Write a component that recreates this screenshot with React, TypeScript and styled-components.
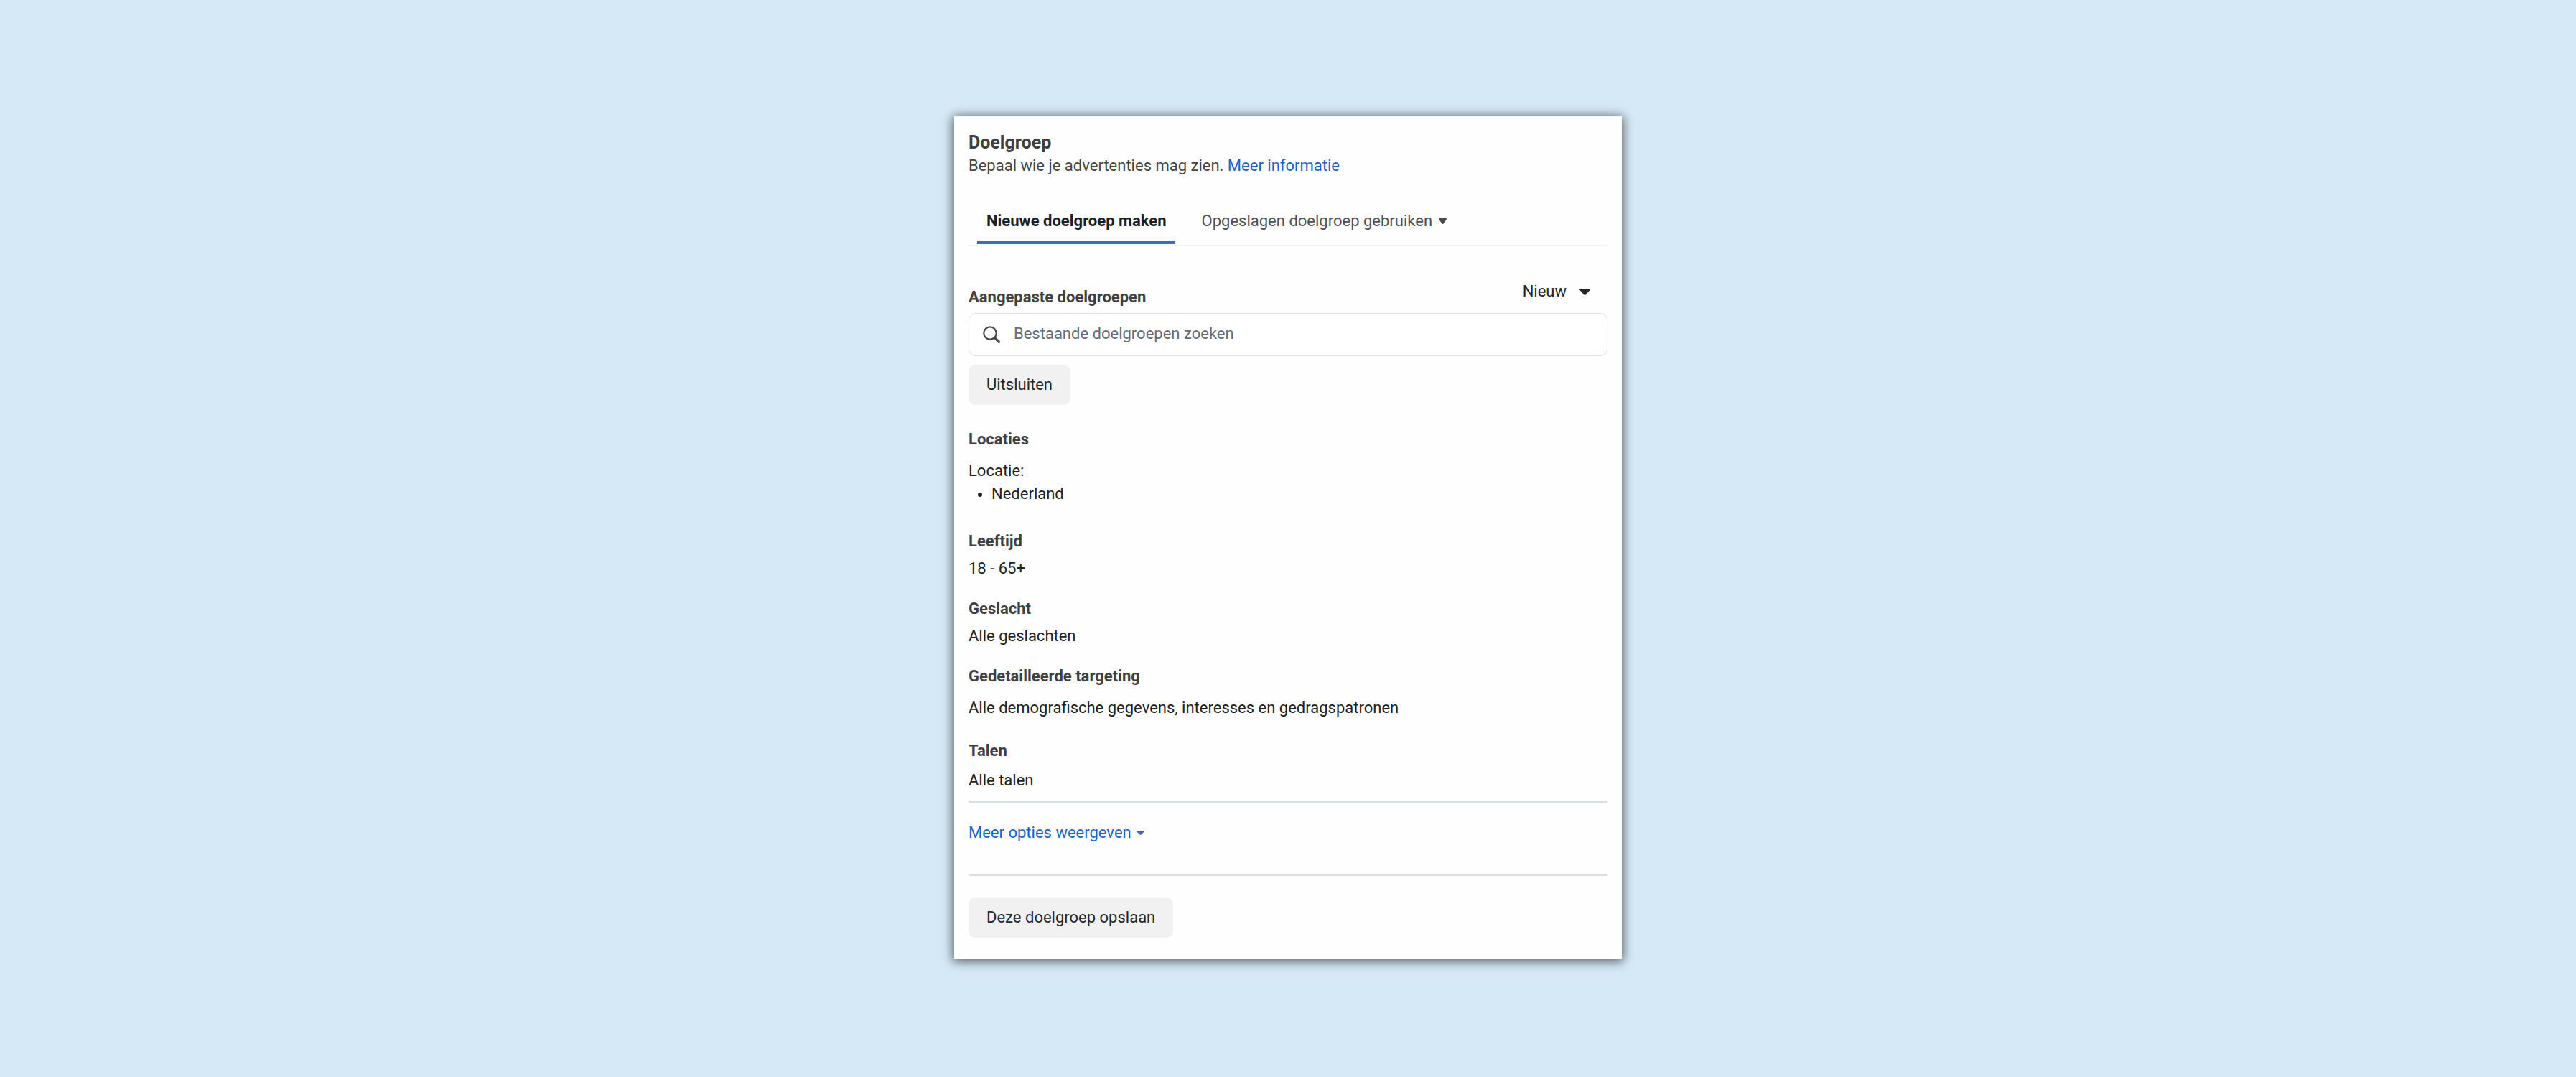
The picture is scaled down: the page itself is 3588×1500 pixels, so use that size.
import React from "react";
import styled, { createGlobalStyle } from "styled-components";

const GlobalStyle = createGlobalStyle`
  *, *::before, *::after { box-sizing: border-box; }
  body {
    margin: 0;
    background: #d5e9f7;
    color: #1f2123;
    font-family: Roboto, "Liberation Sans", sans-serif;
    font-size: 22px;
    line-height: 32px;
  }
  h1, h2, p, ul { margin: 0; }
  button, input { font: inherit; }
`;

const Page = styled.main`
  display: flex;
  justify-content: center;
  align-items: flex-start;
  min-height: 100vh;
  padding: 162px 24px;
`;

const Card = styled.section`
  width: 100%;
  max-width: 930px;
  padding: 21px 20px 29px;
  background: #fefefe;
  box-shadow: 0 2px 14px 2px rgba(0, 0, 0, 0.6);
`;

const Title = styled.h1`
  color: #404040;
  font-size: 25px;
  line-height: 32px;
  font-weight: 700;
`;

const Intro = styled.p`
  color: #444;
`;

const Link = styled.a`
  color: #1763cf;
  text-decoration: none;
`;

const Tabs = styled.div`
  display: flex;
  gap: 24px;
  margin-top: 45px;
  padding: 0 12px 1px;
  border-bottom: 2px solid #f3f3f5;
`;

const Tab = styled.button<{ $active?: boolean }>`
  display: flex;
  align-items: center;
  gap: 9px;
  padding: 0 12px 11px 13px;
  border: 0;
  border-bottom: 5px solid ${(p) => (p.$active ? "#4267b2" : "transparent")};
  background: none;
  color: ${(p) => (p.$active ? "#1c1e26" : "#4f5057")};
  font-weight: ${(p) => (p.$active ? 700 : 400)};
`;

const AudienceHeader = styled.div`
  display: flex;
  justify-content: space-between;
  height: 40px;
  margin-top: 47px;
`;

const Heading = styled.h2`
  color: #404040;
  font-size: 22px;
  line-height: 32px;
  font-weight: 700;
`;

const AudienceLabel = styled.label`
  align-self: flex-end;
  color: #404040;
  font-weight: 700;
`;

const NewButton = styled.button`
  display: flex;
  align-items: center;
  align-self: flex-start;
  gap: 18px;
  padding: 0 24px;
  border: 0;
  background: none;
  color: #262626;
`;

const SearchBox = styled.div`
  display: flex;
  align-items: center;
  gap: 19px;
  height: 60px;
  margin: 6px 0 12px;
  padding: 0 19px;
  border: 1px solid #dddfe3;
  border-radius: 10px;
  background: #fff;
`;

const SearchInput = styled.input`
  flex: 1;
  min-width: 0;
  padding: 0 0 2px;
  border: 0;
  outline: 0;
  background: none;
  color: #1f2123;
  &::placeholder {
    color: #646b76;
    opacity: 1;
  }
`;

const Button = styled.button`
  display: block;
  height: 56px;
  padding: 0 25px;
  border: 0;
  border-radius: 9px;
  background: #f1f1f1;
  color: #262729;
`;

const Field = styled.section<{ $before: number; $gap: number }>`
  display: flex;
  flex-direction: column;
  gap: ${(p) => p.$gap}px;
  margin-top: ${(p) => p.$before}px;
`;

const Locations = styled.ul`
  padding: 0 0 0 32px;
  list-style: none;
`;

const Location = styled.li`
  &::before {
    content: "";
    display: inline-block;
    width: 6px;
    height: 6px;
    margin: 0 13px 3px -19px;
    border-radius: 50%;
    background: #222;
  }
`;

const MoreBar = styled.div`
  margin: 12px 0 30px;
  padding: 26px 0 41px;
  border-top: 3px solid #dadde2;
  border-bottom: 3px solid #dadde2;
`;

const MoreButton = styled.button`
  display: flex;
  align-items: center;
  gap: 7px;
  padding: 0;
  border: 0;
  background: none;
  color: #1763cf;
`;

function Caret({ width, height, color }: { width: number; height: number; color: string }) {
  return (
    <svg width={width} height={height} viewBox="0 0 14 9" preserveAspectRatio="none" aria-hidden="true">
      <path
        d="M1.4 0h11.2c1.3 0 1.8 1.3.9 2.1L8.3 8.3c-.8.9-1.8.9-2.6 0L.5 2.1C-.4 1.3.1 0 1.4 0z"
        fill={color}
      />
    </svg>
  );
}

function SearchIcon() {
  return (
    <svg width="24" height="24" viewBox="0 0 24 24" fill="none" stroke="#43474e" aria-hidden="true">
      <circle cx="10" cy="10" r="8.7" strokeWidth="2.2" />
      <path d="M16 16l2 2" strokeWidth="2.2" />
      <path d="M17.6 17.6l4.7 4.7" strokeWidth="3.4" strokeLinecap="round" />
    </svg>
  );
}

export default function App() {
  return (
    <>
      <GlobalStyle />
      <Page>
        <Card>
          <Title>Doelgroep</Title>
          <Intro>
            Bepaal wie je advertenties mag zien. <Link href="#info">Meer informatie</Link>
          </Intro>

          <Tabs role="tablist">
            <Tab type="button" role="tab" aria-selected="true" $active>
              Nieuwe doelgroep maken
            </Tab>
            <Tab type="button" role="tab" aria-selected="false">
              Opgeslagen doelgroep gebruiken
              <Caret width={11} height={8} color="#4b4b4f" />
            </Tab>
          </Tabs>

          <AudienceHeader>
            <AudienceLabel htmlFor="audience-search">Aangepaste doelgroepen</AudienceLabel>
            <NewButton type="button" aria-haspopup="menu">
              Nieuw
              <Caret width={15} height={9} color="#262626" />
            </NewButton>
          </AudienceHeader>
          <SearchBox>
            <SearchIcon />
            <SearchInput id="audience-search" type="text" placeholder="Bestaande doelgroepen zoeken" />
          </SearchBox>
          <Button type="button">Uitsluiten</Button>

          <Field $before={32} $gap={12}>
            <Heading>Locaties</Heading>
            <div>
              <p>Locatie:</p>
              <Locations>
                <Location>Nederland</Location>
              </Locations>
            </div>
          </Field>
          <Field $before={34} $gap={6}>
            <Heading>Leeftijd</Heading>
            <p>18 - 65+</p>
          </Field>
          <Field $before={24} $gap={6}>
            <Heading>Geslacht</Heading>
            <p>Alle geslachten</p>
          </Field>
          <Field $before={24} $gap={12}>
            <Heading>Gedetailleerde targeting</Heading>
            <p>Alle demografische gegevens, interesses en gedragspatronen</p>
          </Field>
          <Field $before={28} $gap={9}>
            <Heading>Talen</Heading>
            <p>Alle talen</p>
          </Field>

          <MoreBar>
            <MoreButton type="button" aria-expanded="false">
              Meer opties weergeven
              <Caret width={11} height={6} color="#4267b2" />
            </MoreButton>
          </MoreBar>
          <Button type="button">Deze doelgroep opslaan</Button>
        </Card>
      </Page>
    </>
  );
}
